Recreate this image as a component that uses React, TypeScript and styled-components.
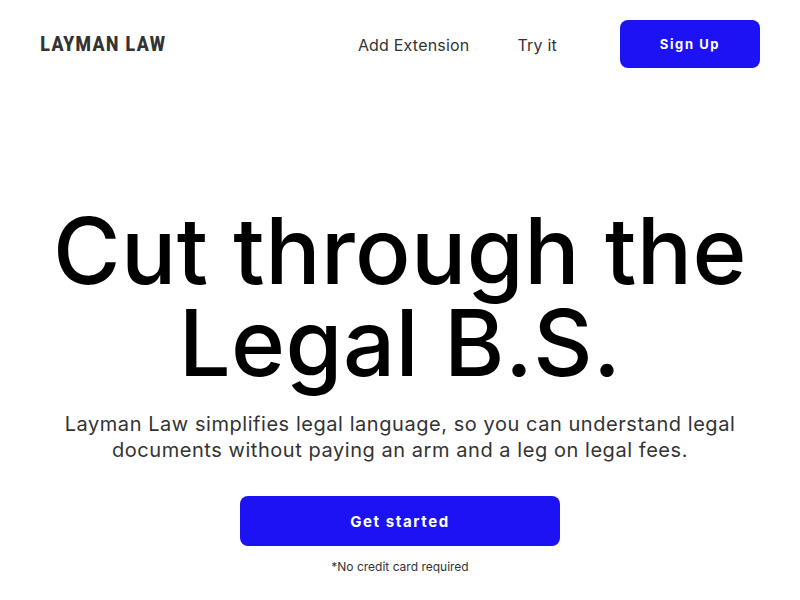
import styled, { createGlobalStyle } from "styled-components";

const GlobalStyle = createGlobalStyle`
  html, body {
    margin: 0;
    padding: 0;
    background: #ffffff;
  }
  body {
    font-family: "Inter", "Liberation Sans", sans-serif;
    color: #111;
  }
  * {
    box-sizing: border-box;
  }
`;

const Page = styled.div`
  width: 800px;
  height: 600px;
  display: flex;
  flex-direction: column;
  overflow: hidden;
`;

const Header = styled.header`
  display: flex;
  align-items: center;
  justify-content: space-between;
  padding: 20px 40px 0 40px;
  height: 68px;
`;

const Logo = styled.div`
  font-family: "Liberation Sans Narrow", "Roboto Condensed", "Liberation Sans", sans-serif;
  font-weight: 700;
  font-size: 21px;
  color: #333;
  letter-spacing: 0.9px;
`;

const Nav = styled.nav`
  display: flex;
  align-items: center;
`;

const NavLink = styled.a<{ $gap?: number }>`
  font-family: "Inter", sans-serif;
  font-size: 16px;
  letter-spacing: 0.2px;
  color: #333;
  text-decoration: none;
  padding-top: 2px;
  margin-right: ${(p) => p.$gap ?? 48}px;
`;

const Button = styled.button<{ $w: number; $h: number; $size: number }>`
  width: ${(p) => p.$w}px;
  height: ${(p) => p.$h}px;
  background: #1c12f4;
  color: #fff;
  border: none;
  border-radius: 8px;
  font-family: "Inter", sans-serif;
  font-weight: 700;
  font-size: ${(p) => p.$size}px;
  letter-spacing: 1.6px;
  cursor: pointer;
`;

const Hero = styled.main`
  display: flex;
  flex-direction: column;
  align-items: center;
  padding-top: 137px;
`;

const Title = styled.h1`
  margin: 0;
  font-family: "Inter", sans-serif;
  font-weight: 500;
  font-size: 92px;
  line-height: 92px;
  text-align: center;
  color: #000;
  letter-spacing: 0.4px;
`;

const Subtitle = styled.p`
  margin: 22px 0 0 0;
  font-family: "Inter", sans-serif;
  font-size: 20px;
  line-height: 26px;
  letter-spacing: 0.55px;
  color: #333;
  text-align: center;
  width: 720px;
`;

const CtaWrap = styled.div`
  margin-top: 33px;
  display: flex;
  flex-direction: column;
  align-items: center;
  gap: 13px;
`;

const Note = styled.span`
  font-family: "Inter", sans-serif;
  font-size: 12px;
  color: #333;
`;

export default function App() {
  return (
    <>
      <GlobalStyle />
      <Page>
        <Header>
          <Logo>LAYMAN LAW</Logo>
          <Nav>
            <NavLink href="#">Add Extension</NavLink>
            <NavLink href="#" $gap={63}>Try it</NavLink>
            <Button $w={140} $h={48} $size={13}>Sign Up</Button>
          </Nav>
        </Header>
        <Hero>
          <Title>
            Cut through the
            <br />
            Legal B.S.
          </Title>
          <Subtitle>
            Layman Law simplifies legal language, so you can understand legal
            documents without paying an arm and a leg on legal fees.
          </Subtitle>
          <CtaWrap>
            <Button $w={320} $h={50} $size={15}>Get started</Button>
            <Note>*No credit card required</Note>
          </CtaWrap>
        </Hero>
      </Page>
    </>
  );
}
